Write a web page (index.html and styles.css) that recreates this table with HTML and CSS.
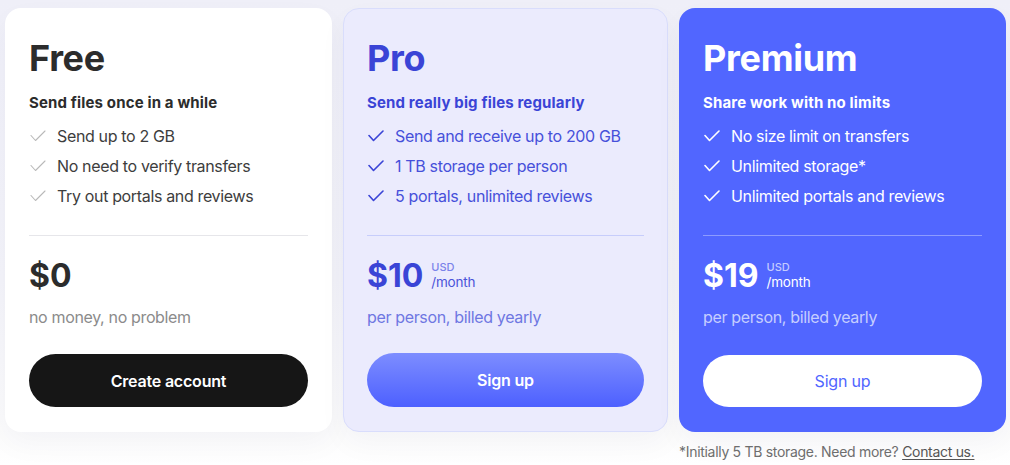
FILE: index.html
```html
<!DOCTYPE html>
<html lang="en">
<head>
<meta charset="utf-8">
<title>Plans</title>
<link rel="stylesheet" href="styles.css">
</head>
<body>
<div class="plans">
  <div class="card card-free">
    <h2 class="title">Free</h2>
    <p class="subtitle">Send files once in a while</p>
    <ul class="features">
      <li><svg class="check" viewBox="0 0 16 12"><polyline points="1,5.5 5.5,10.5 15,1"/></svg>Send up to 2 GB</li>
      <li><svg class="check" viewBox="0 0 16 12"><polyline points="1,5.5 5.5,10.5 15,1"/></svg>No need to verify transfers</li>
      <li><svg class="check" viewBox="0 0 16 12"><polyline points="1,5.5 5.5,10.5 15,1"/></svg>Try out portals and reviews</li>
    </ul>
    <hr class="divider">
    <div class="price"><span class="amount">$0</span></div>
    <p class="desc">no money, no problem</p>
    <a class="btn btn-dark">Create account</a>
  </div>
  <div class="card card-pro">
    <h2 class="title">Pro</h2>
    <p class="subtitle">Send really big files regularly</p>
    <ul class="features">
      <li><svg class="check" viewBox="0 0 16 12"><polyline points="1,5.5 5.5,10.5 15,1"/></svg>Send and receive up to 200 GB</li>
      <li><svg class="check" viewBox="0 0 16 12"><polyline points="1,5.5 5.5,10.5 15,1"/></svg>1 TB storage per person</li>
      <li><svg class="check" viewBox="0 0 16 12"><polyline points="1,5.5 5.5,10.5 15,1"/></svg>5 portals, unlimited reviews</li>
    </ul>
    <hr class="divider">
    <div class="price"><span class="amount">$10</span><span class="unit"><span class="cur">USD</span><span class="per">/month</span></span></div>
    <p class="desc">per person, billed yearly</p>
    <a class="btn btn-grad">Sign up</a>
  </div>
  <div class="col-premium">
    <div class="card card-premium">
      <h2 class="title">Premium</h2>
      <p class="subtitle">Share work with no limits</p>
      <ul class="features">
        <li><svg class="check" viewBox="0 0 16 12"><polyline points="1,5.5 5.5,10.5 15,1"/></svg>No size limit on transfers</li>
        <li><svg class="check" viewBox="0 0 16 12"><polyline points="1,5.5 5.5,10.5 15,1"/></svg>Unlimited storage*</li>
        <li><svg class="check" viewBox="0 0 16 12"><polyline points="1,5.5 5.5,10.5 15,1"/></svg>Unlimited portals and reviews</li>
      </ul>
      <hr class="divider">
      <div class="price"><span class="amount">$19</span><span class="unit"><span class="cur">USD</span><span class="per">/month</span></span></div>
      <p class="desc">per person, billed yearly</p>
      <a class="btn btn-white">Sign up</a>
    </div>
    <p class="footnote">*Initially 5 TB storage. Need more? <a class="link">Contact us.</a></p>
  </div>
</div>
</body>
</html>
```

FILE: styles.css
```css
* { box-sizing: border-box; }
html, body { margin: 0; height: 100%; }
body {
  font-family: Inter, "Noto Sans", sans-serif;
  background: linear-gradient(180deg, #efeff8 0%, #f3f3f9 60%, #fafafb 90%, #ffffff 100%);
  padding: 8px 4px 0 5px;
}
.plans {
  display: grid;
  grid-template-columns: 327px 325px 327px;
  column-gap: 11px;
  align-items: start;
}
.card {
  height: 424px;
  border-radius: 16px;
  padding: 28px 24px 25px 24px;
  display: flex;
  flex-direction: column;
  box-shadow: 0 12px 30px rgba(40, 40, 80, 0.035);
}
.title {
  margin: 0;
  font-size: 36px;
  line-height: 44px;
  font-weight: 700;
  letter-spacing: -0.3px;
}
.subtitle {
  margin: 13px 0 0;
  font-size: 15px;
  line-height: 20px;
  font-weight: 700;
  letter-spacing: 0.15px;
}
.features {
  list-style: none;
  margin: 8px 0 0;
  padding: 0;
}
.features li {
  display: flex;
  align-items: center;
  font-size: 16px;
  line-height: 30px;
  letter-spacing: -0.35px;
}
.check {
  width: 16px;
  height: 12px;
  margin: 0 11px 0 1px;
  fill: none;
  stroke-linecap: round;
  stroke-linejoin: round;
  flex: none;
}
.divider {
  margin: 24px 0 0;
  border: 0;
  height: 1px;
}
.price {
  margin-top: 20px;
  display: flex;
  align-items: flex-end;
  height: 40px;
}
.amount {
  font-size: 32px;
  line-height: 40px;
  font-weight: 700;
}
.unit {
  display: flex;
  flex-direction: column;
  gap: 1px;
  margin-left: 8px;
  margin-bottom: 6px;
}
.cur { font-size: 11px; line-height: 13px; font-weight: 500; }
.per { font-size: 13.5px; line-height: 15px; letter-spacing: -0.2px; }
.desc {
  margin: 9px 0 0;
  font-size: 16px;
  line-height: 24px;
  letter-spacing: -0.35px;
}
.btn {
  margin-top: 25px;
  height: 53px;
  border-radius: 27px;
  display: flex;
  align-items: center;
  justify-content: center;
  font-size: 16px;
  font-weight: 600;
  letter-spacing: -0.2px;
}

/* Free */
.card-free { background: #ffffff; }
.card-free .title, .card-free .subtitle, .card-free .amount { color: #2c2c2c; }
.card-free .features li { color: #3d3d3d; }
.card-free .check { stroke: #b9b9b9; stroke-width: 1.1; }
.card-free .divider { background: #e6e6ea; }
.card-free .desc { color: #8b8b8b; }
.btn-dark { background: #161616; color: #ffffff; }

/* Pro */
.card-pro {
  background: #ebebfd;
  border: 1px solid #d9ddfc;
  padding: 27px 23px 24px 23px;
}
.card-pro .title, .card-pro .subtitle, .card-pro .amount { color: #3a44d6; }
.card-pro .features li { color: #4650da; }
.card-pro .check { stroke: #3a44d6; stroke-width: 1.6; }
.card-pro .divider { background: #c7cdfb; }
.card-pro .cur { color: #7a83ea; }
.card-pro .per { color: #4a53d9; }
.card-pro .desc { color: #6f77e2; }
.btn-grad {
  background: linear-gradient(180deg, #7d8dff 0%, #4d60ff 100%);
  color: #ffffff;
  height: 54px;
  margin-top: 24px;
}

/* Premium */
.card-premium { background: #5166ff; }
.card-premium .title, .card-premium .subtitle, .card-premium .amount, .card-premium .features li { color: #ffffff; }
.card-premium .check { stroke: #ffffff; stroke-width: 1.6; }
.card-premium .divider { background: rgba(255, 255, 255, 0.35); }
.card-premium .cur { color: #c4cbff; }
.card-premium .per { color: #ffffff; }
.card-premium .desc { color: #c6ceff; }
.card-premium .btn { margin-top: 26px; height: 52px; }
.btn-white { background: #ffffff; color: #5166ff; font-weight: 400; }

.footnote {
  margin: 10px 0 0;
  font-size: 14px;
  line-height: 20px;
  color: #6e6e6e;
  letter-spacing: -0.3px;
}
.link { color: #555555; text-decoration: underline; text-underline-offset: 2px; }
```
